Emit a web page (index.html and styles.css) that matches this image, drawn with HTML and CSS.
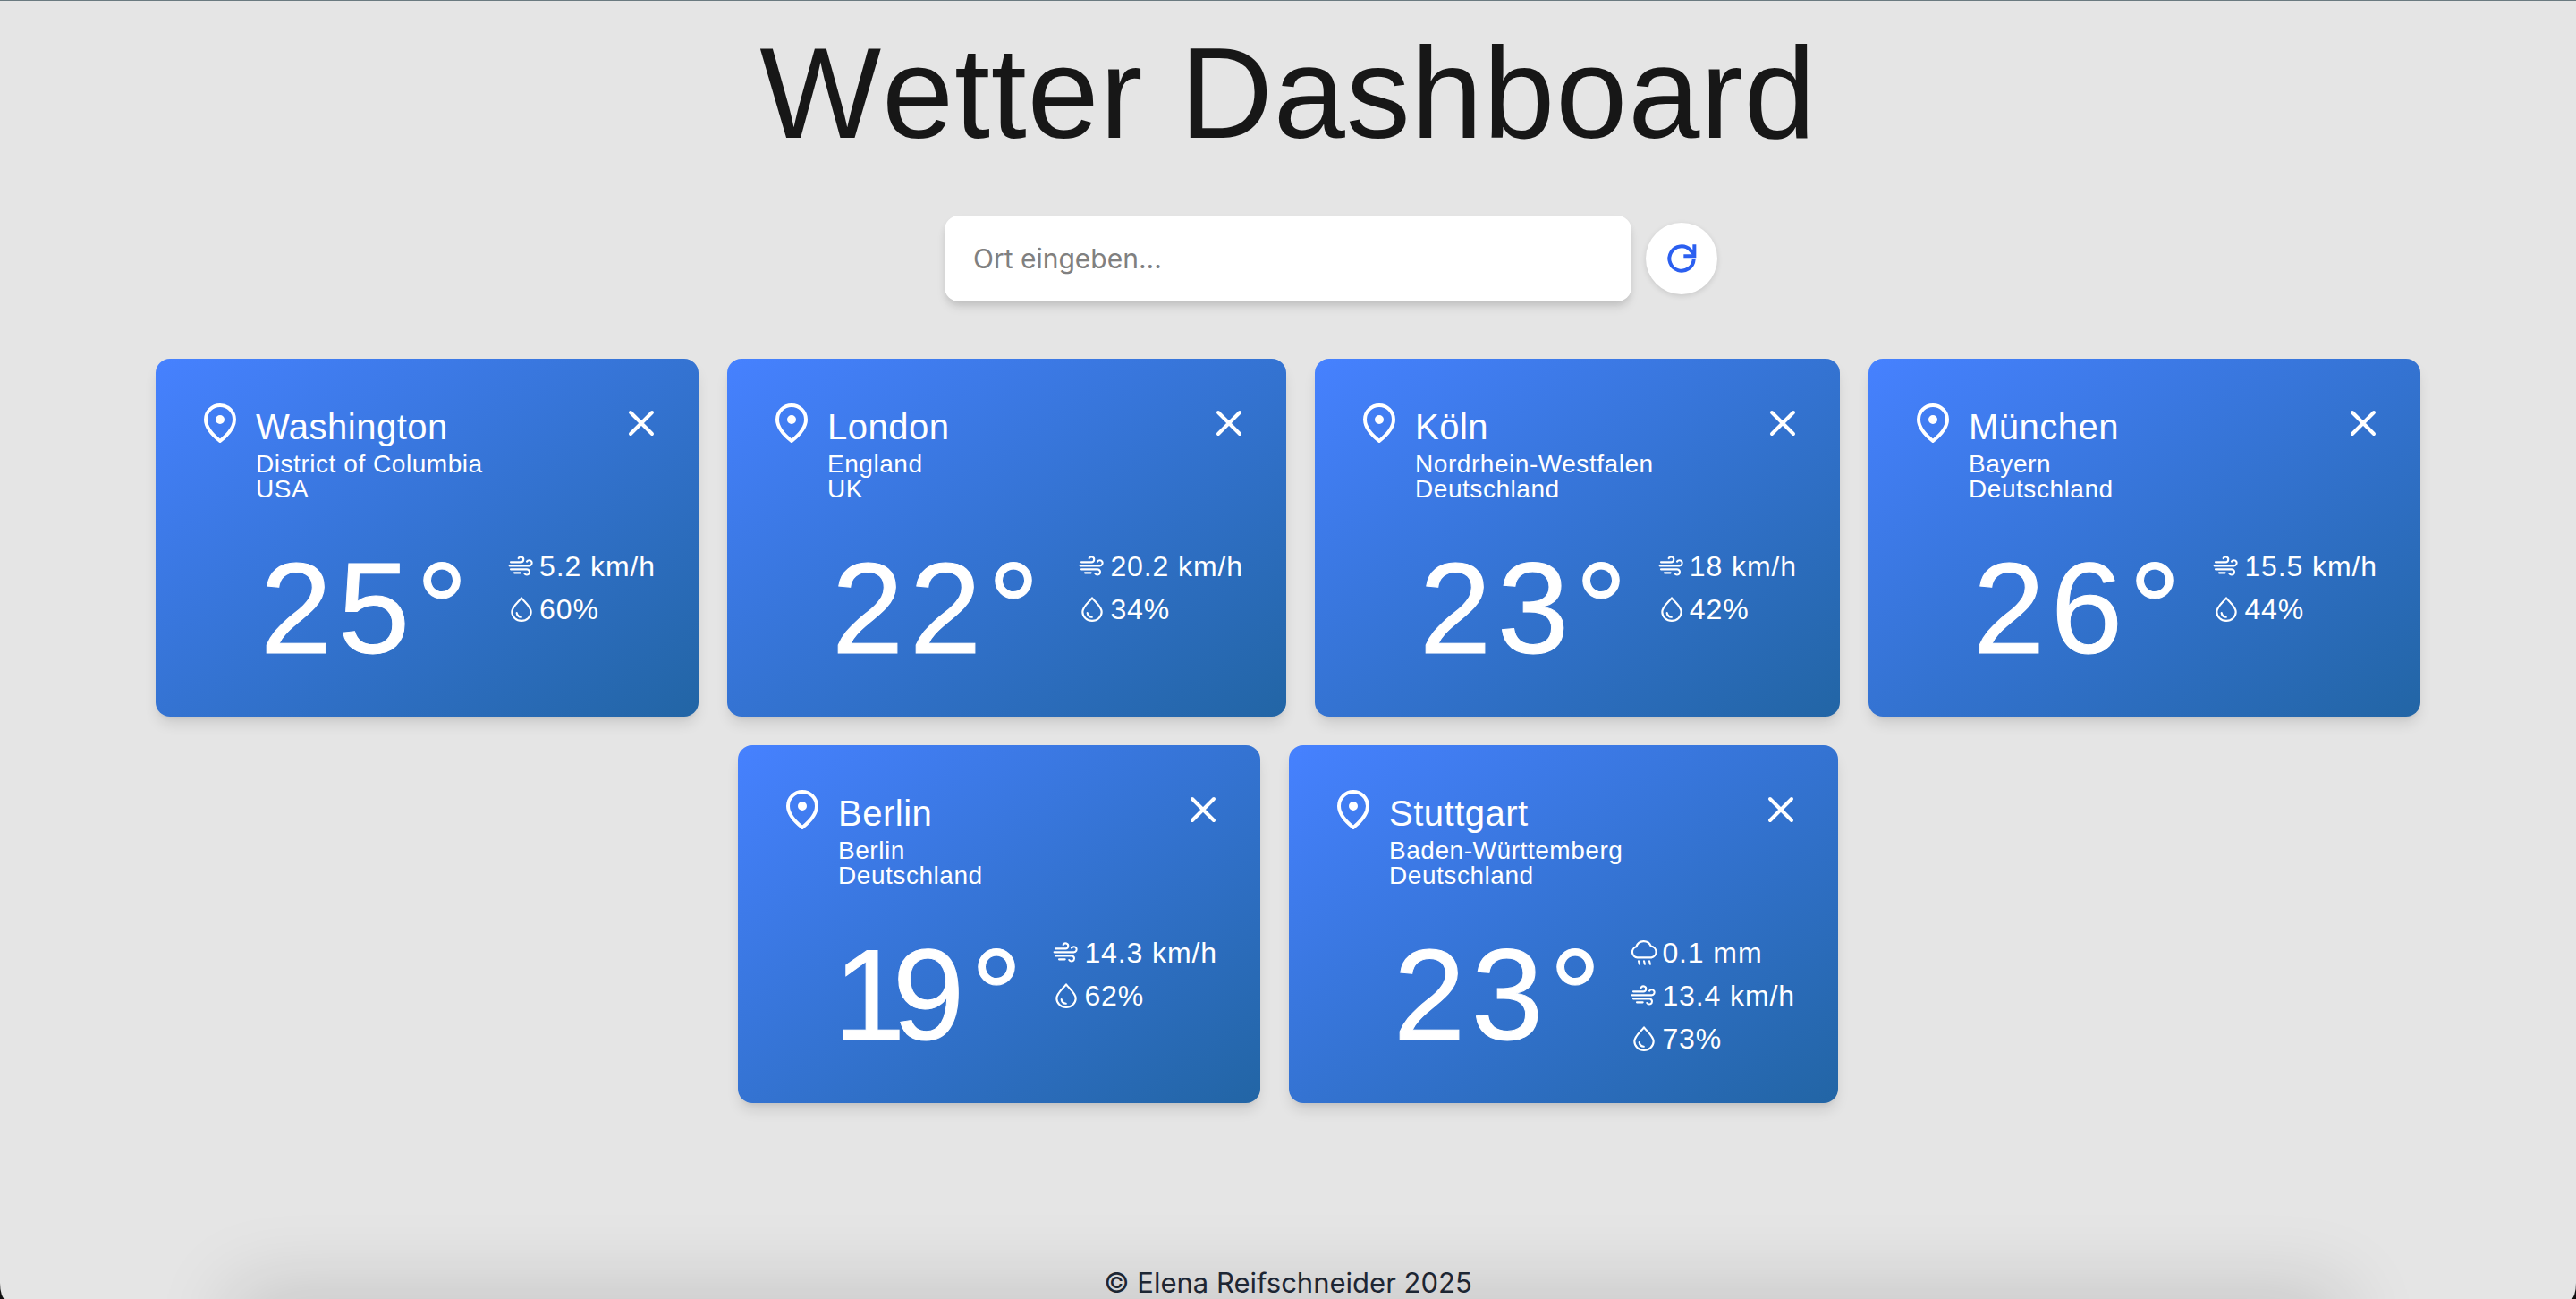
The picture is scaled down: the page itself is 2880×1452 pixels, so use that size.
FILE: index.html
```html
<!DOCTYPE html>
<html lang="de">
<head>
    <meta charset="UTF-8">
    <title>Wetter Dashboard</title>
    <link rel="stylesheet" href="styles.css">
</head>
<body>
    <svg class="sprite" width="0" height="0">
        <symbol id="i-pin" viewBox="0 0 24 24"><path d="M20 10c0 5-5.500 10-8 12-2.500-2-8-7-8-12a8 8 0 0 1 16 0z"/><circle cx="12" cy="10" r="1.500" class="dot"/></symbol>
        <symbol id="i-x" viewBox="0 0 24 24"><path d="M18 6 6 18M6 6l12 12"/></symbol>
        <symbol id="i-wind" viewBox="0 0 24 24"><path d="M3 8.500h8.500a2.200 2.200 0 1 0-2-3.200"/><path d="M2 11.500h16.500a2.300 2.300 0 1 0-2-3.500"/><path d="M3 14.500h13.500a2.300 2.300 0 1 1-2 3.500"/><path d="M6 17.500h5"/></symbol>
        <symbol id="i-drop" viewBox="0 0 24 24"><path d="M12 2.500c2.500 3.400 8 7.300 8 11.800a8 7.400 0 0 1-16 0c0-4.500 5.500-8.400 8-11.800z"/><path d="M8 15a4.300 4.300 0 0 0 3.800 3.600"/></symbol>
        <symbol id="i-rain" viewBox="0 0 24 24"><path d="M6.500 16A4.600 4.600 0 0 1 5.500 7a6.500 6.500 0 0 1 12.300-.5 4.800 4.800 0 0 1 .4 9.500H6.500z"/><path d="M7.500 19l.7 2.500M12 19l.7 2.500M16.500 19l.7 2.500"/></symbol>
        <symbol id="i-refresh" viewBox="0 0 24 24"><path d="M20.200 12.500a8.200 8.200 0 1 1-2.400-6.300l2.800 3.200"/><path d="M20.600 2.600v7.800h-7.200"/></symbol>
    </svg>

    <main class="page">
        <h1 class="title">Wetter Dashboard</h1>

        <div class="search">
            <input class="search-input" type="text" placeholder="Ort eingeben...">
            <button class="refresh" type="button"><svg class="icon-refresh"><use href="#i-refresh"/></svg></button>
        </div>

        <section class="cards">
            <article class="card card-washington">
                <header class="card-head">
                    <svg class="icon-lg"><use href="#i-pin"/></svg>
                    <div class="place">
                        <h2 class="city">Washington</h2>
                        <p class="region">District of Columbia</p>
                        <p class="region">USA</p>
                    </div>
                    <svg class="icon-lg close"><use href="#i-x"/></svg>
                </header>
                <div class="card-body">
                    <div class="temp">25°</div>
                    <ul class="metrics">
                        <li><svg class="icon-sm"><use href="#i-wind"/></svg>5.2 km/h</li>
                        <li><svg class="icon-sm"><use href="#i-drop"/></svg>60%</li>
                    </ul>
                </div>
            </article>

            <article class="card card-london">
                <header class="card-head">
                    <svg class="icon-lg"><use href="#i-pin"/></svg>
                    <div class="place">
                        <h2 class="city">London</h2>
                        <p class="region">England</p>
                        <p class="region">UK</p>
                    </div>
                    <svg class="icon-lg close"><use href="#i-x"/></svg>
                </header>
                <div class="card-body">
                    <div class="temp">22°</div>
                    <ul class="metrics">
                        <li><svg class="icon-sm"><use href="#i-wind"/></svg>20.2 km/h</li>
                        <li><svg class="icon-sm"><use href="#i-drop"/></svg>34%</li>
                    </ul>
                </div>
            </article>

            <article class="card card-koeln">
                <header class="card-head">
                    <svg class="icon-lg"><use href="#i-pin"/></svg>
                    <div class="place">
                        <h2 class="city">Köln</h2>
                        <p class="region">Nordrhein-Westfalen</p>
                        <p class="region">Deutschland</p>
                    </div>
                    <svg class="icon-lg close"><use href="#i-x"/></svg>
                </header>
                <div class="card-body">
                    <div class="temp">23°</div>
                    <ul class="metrics">
                        <li><svg class="icon-sm"><use href="#i-wind"/></svg>18 km/h</li>
                        <li><svg class="icon-sm"><use href="#i-drop"/></svg>42%</li>
                    </ul>
                </div>
            </article>

            <article class="card card-muenchen">
                <header class="card-head">
                    <svg class="icon-lg"><use href="#i-pin"/></svg>
                    <div class="place">
                        <h2 class="city">München</h2>
                        <p class="region">Bayern</p>
                        <p class="region">Deutschland</p>
                    </div>
                    <svg class="icon-lg close"><use href="#i-x"/></svg>
                </header>
                <div class="card-body">
                    <div class="temp">26°</div>
                    <ul class="metrics">
                        <li><svg class="icon-sm"><use href="#i-wind"/></svg>15.5 km/h</li>
                        <li><svg class="icon-sm"><use href="#i-drop"/></svg>44%</li>
                    </ul>
                </div>
            </article>

            <article class="card card-berlin">
                <header class="card-head">
                    <svg class="icon-lg"><use href="#i-pin"/></svg>
                    <div class="place">
                        <h2 class="city">Berlin</h2>
                        <p class="region">Berlin</p>
                        <p class="region">Deutschland</p>
                    </div>
                    <svg class="icon-lg close"><use href="#i-x"/></svg>
                </header>
                <div class="card-body">
                    <div class="temp"><span class="digit-one">1</span>9°</div>
                    <ul class="metrics">
                        <li><svg class="icon-sm"><use href="#i-wind"/></svg>14.3 km/h</li>
                        <li><svg class="icon-sm"><use href="#i-drop"/></svg>62%</li>
                    </ul>
                </div>
            </article>

            <article class="card card-stuttgart">
                <header class="card-head">
                    <svg class="icon-lg"><use href="#i-pin"/></svg>
                    <div class="place">
                        <h2 class="city">Stuttgart</h2>
                        <p class="region">Baden-Württemberg</p>
                        <p class="region">Deutschland</p>
                    </div>
                    <svg class="icon-lg close"><use href="#i-x"/></svg>
                </header>
                <div class="card-body">
                    <div class="temp">23°</div>
                    <ul class="metrics">
                        <li><svg class="icon-sm"><use href="#i-rain"/></svg>0.1 mm</li>
                        <li><svg class="icon-sm"><use href="#i-wind"/></svg>13.4 km/h</li>
                        <li><svg class="icon-sm"><use href="#i-drop"/></svg>73%</li>
                    </ul>
                </div>
            </article>
        </section>
    </main>

    <footer class="footer">© Elena Reifschneider 2025</footer>
</body>
</html>
```

FILE: styles.css
```css
/* Reset some default styles */
body, h1, h2, p, ul {
    margin: 0;
    padding: 0;
}

html, body {
    height: 100%;
}

html {
    background-color: #111;
}

body {
    display: flex;
    flex-direction: column;
    box-sizing: border-box;
    overflow: hidden;
    position: relative;
    border-top: 1px solid #6a7a80;
    border-radius: 0 0 6px 6px / 0 0 18px 18px;
    background-color: #e5e5e5;
    font-family: "Liberation Sans", Arial, sans-serif;
    color: #171717;
}

.sprite {
    position: absolute;
}

.page {
    flex: 1;
    padding: 32px 64px 0;
}

.title {
    font-size: 144px;
    font-weight: 400;
    font-kerning: none;
    line-height: 144px;
    letter-spacing: 0.8px;
    text-align: center;
}

/* Search */
.search {
    display: grid;
    grid-template-columns: 1fr 768px 1fr;
    column-gap: 16px;
    align-items: center;
    margin-top: 64px;
}

.search-input {
    grid-column: 2;
    box-sizing: border-box;
    height: 96px;
    padding: 0 32px;
    border: none;
    border-radius: 16px;
    background-color: #fff;
    box-shadow: 0 8px 12px -2px rgba(0, 0, 0, 0.1), 0 4px 8px -2px rgba(0, 0, 0, 0.1);
    font-family: Inter, sans-serif;
    font-size: 30px;
    outline: none;
}

.search-input::placeholder {
    color: #808080;
}

.refresh {
    display: flex;
    align-items: center;
    justify-content: center;
    width: 80px;
    height: 80px;
    padding: 0;
    border: none;
    border-radius: 50%;
    background-color: #fff;
    box-shadow: 0 2px 6px rgba(0, 0, 0, 0.12);
}

.icon-refresh {
    width: 40px;
    height: 40px;
    fill: none;
    stroke: #2b5ff0;
    stroke-width: 2.4;
}

/* Cards */
.cards {
    display: flex;
    flex-wrap: wrap;
    justify-content: center;
    gap: 32px;
    margin-top: 64px;
}

.card {
    box-sizing: border-box;
    height: 400px;
    padding: 48px;
    border-radius: 16px;
    background: linear-gradient(to bottom right, #4681ff, #2265a5);
    box-shadow: 0 10px 16px -3px rgba(0, 0, 0, 0.12), 0 4px 6px -4px rgba(0, 0, 0, 0.1);
    color: #fff;
}

.card-washington { width: 607px; }
.card-london { width: 625px; }
.card-koeln { width: 587px; }
.card-muenchen { width: 617px; }
.card-berlin { width: 584px; }
.card-stuttgart { width: 614px; }

.card-head {
    display: flex;
    gap: 16px;
}

.place {
    flex: 1;
}

.city {
    font-size: 40px;
    font-weight: 400;
    line-height: 56px;
    letter-spacing: 0.5px;
}

.region {
    font-size: 28px;
    line-height: 28px;
    letter-spacing: 0.55px;
}

.icon-lg {
    flex: none;
    width: 48px;
    height: 48px;
    fill: none;
    stroke: #fff;
    stroke-width: 2;
    stroke-linecap: round;
    stroke-linejoin: round;
}

.dot {
    fill: #fff;
}

.close {
    margin-right: -8px;
}

.card-body {
    display: flex;
    margin: 48px 0 0 64px;
}

.temp {
    margin-left: 5px;
    font-size: 144px;
    line-height: 144px;
    letter-spacing: 7px;
    -webkit-text-stroke: 1px #fff;
}

.digit-one {
    margin-left: -10px;
    letter-spacing: -14px;
}

.metrics {
    list-style: none;
    margin-left: auto;
    font-size: 32px;
    line-height: 48px;
    letter-spacing: 0.9px;
}

.metrics li {
    display: flex;
    align-items: center;
    gap: 4px;
    white-space: nowrap;
}

.icon-sm {
    flex: none;
    width: 32px;
    height: 32px;
    fill: none;
    stroke: #fff;
    stroke-width: 1.6;
    stroke-linecap: round;
    stroke-linejoin: round;
}

/* Footer */
.footer {
    position: relative;
    margin-bottom: -6px;
    font-family: Inter, sans-serif;
    font-size: 31px;
    line-height: 48px;
    text-align: center;
    color: #1f2937;
}

.footer::before {
    content: "";
    position: absolute;
    left: 290px;
    right: 290px;
    top: 60px;
    height: 40px;
    box-shadow: 0 0 90px 30px rgba(0, 0, 0, 0.14);
}
```
